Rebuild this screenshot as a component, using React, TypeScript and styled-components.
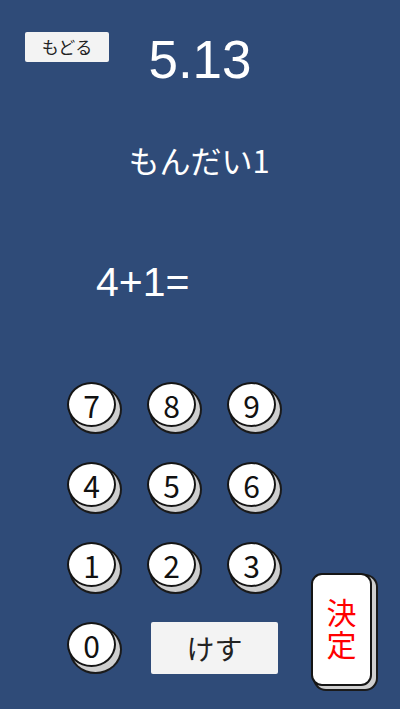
import React from "react";
import styled, { createGlobalStyle } from "styled-components";

const Global = createGlobalStyle`
  html, body { margin: 0; padding: 0; background: #2f4b78; }
  #root { width: 400px; height: 709px; }
`;

const Screen = styled.div`
  width: 400px;
  height: 709px;
  box-sizing: border-box;
  background: #2f4b78;
  display: flex;
  flex-direction: column;
  overflow: hidden;
  font-family: "Noto Sans CJK JP", "Liberation Sans", sans-serif;
`;

const Header = styled.div`
  margin-top: 30px;
  display: grid;
  grid-template-columns: 1fr auto 1fr;
  align-items: start;
`;

const BackButton = styled.button`
  justify-self: start;
  margin-left: 25px;
  margin-top: 2px;
  width: 84px;
  height: 30px;
  padding: 0;
  border: none;
  border-radius: 2px;
  background: #f3f3f3;
  color: #222;
  font-family: "Noto Sans CJK JP", sans-serif;
  font-size: 17px;
  line-height: 30px;
`;

const Timer = styled.div`
  font-family: "Liberation Sans", Arial, sans-serif;
  font-size: 53px;
  line-height: 60px;
  color: #fff;
`;

const QuestionLabel = styled.div`
  margin-top: 51px;
  text-align: center;
  color: #fff;
  font-size: 31px;
  line-height: 37px;
  padding-right: 2px;
`;

const Problem = styled.div`
  margin-top: 81px;
  margin-left: 96px;
  color: #fff;
  font-family: "Liberation Sans", Arial, sans-serif;
  font-size: 41px;
  line-height: 46px;
`;

const Pad = styled.div`
  margin-top: 77px;
  margin-left: 67px;
  display: grid;
  grid-template-columns: 80px 80px 80px auto;
  grid-template-rows: 80px 80px 80px 80px;
  align-items: start;
`;

const Key = styled.button<{ $col: number; $row: number }>`
  grid-column: ${(p) => p.$col};
  grid-row: ${(p) => p.$row};
  width: 49px;
  height: 45px;
  padding: 0;
  border: 2px solid #151515;
  border-radius: 50%;
  background: #fff;
  color: #111;
  font-family: "Noto Sans CJK JP", sans-serif;
  font-size: 30px;
  line-height: 40px;
  box-shadow: 4px 5px 0 0 #cfcfcf, 4px 5px 0 2px #1a1a1a;
`;

const ClearButton = styled.button`
  grid-column: 2 / span 2;
  grid-row: 4;
  margin-left: 4px;
  width: 127px;
  height: 52px;
  padding: 0;
  border: none;
  border-radius: 2px;
  background: #f3f3f3;
  color: #222;
  font-family: "Noto Sans CJK JP", sans-serif;
  font-size: 28px;
  line-height: 52px;
`;

const Submit = styled.button`
  grid-column: 4;
  grid-row: 3 / span 2;
  margin-top: 31px;
  margin-left: 4px;
  width: 61px;
  height: 113px;
  padding: 0;
  border: 2px solid #151515;
  border-radius: 11px;
  background: #fff;
  color: #ff0000;
  font-family: "Noto Sans CJK JP", sans-serif;
  font-size: 30px;
  display: flex;
  align-items: center;
  justify-content: center;
  box-shadow: 4px 3px 0 0 #cfcfcf, 4px 3px 0 2px #1a1a1a;
`;

const VerticalLabel = styled.span`
  writing-mode: vertical-rl;
  text-orientation: upright;
  line-height: 1;
  letter-spacing: 2px;
`;

const rows = [
  ["7", "8", "9"],
  ["4", "5", "6"],
  ["1", "2", "3"],
];

export default function App() {
  return (
    <>
      <Global />
      <Screen>
        <Header>
          <BackButton>もどる</BackButton>
          <Timer>5.13</Timer>
          <div />
        </Header>
        <QuestionLabel>もんだい1</QuestionLabel>
        <Problem>4+1=</Problem>
        <Pad>
          {rows.map((r, ri) =>
            r.map((d, ci) => (
              <Key key={d} $col={ci + 1} $row={ri + 1}>
                {d}
              </Key>
            ))
          )}
          <Key $col={1} $row={4}>0</Key>
          <ClearButton>けす</ClearButton>
          <Submit>
            <VerticalLabel>決定</VerticalLabel>
          </Submit>
        </Pad>
      </Screen>
    </>
  );
}
